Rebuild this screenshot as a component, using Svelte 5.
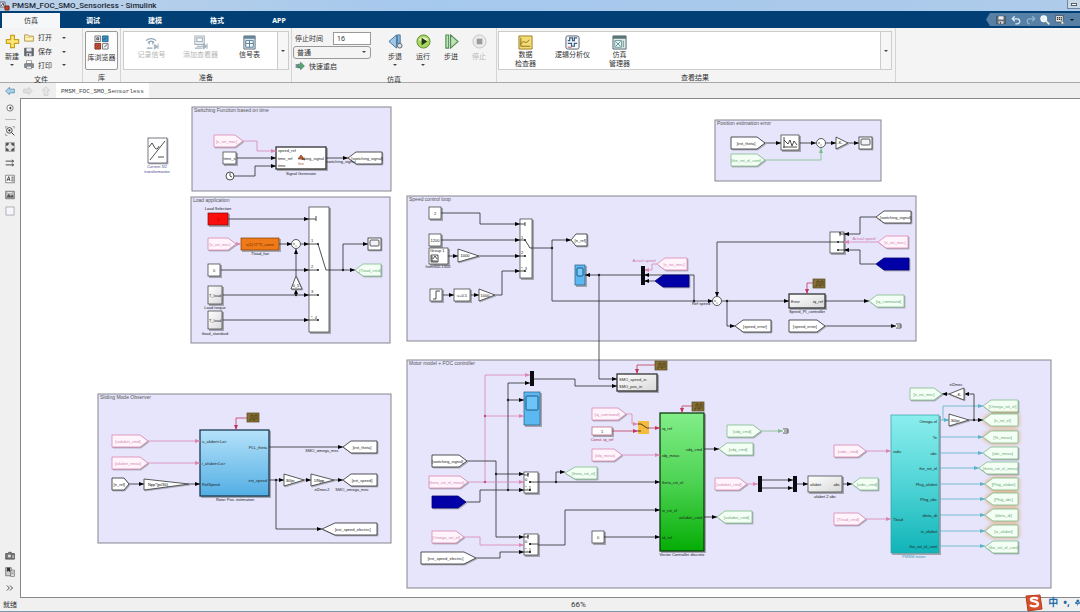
<script lang="ts">
  type Point = number[];

  interface Tag {
    x: number;
    y: number;
    w: number;
    h?: number;
    dir: "l" | "r";
    text?: string;
    tone?: string;
    tip?: number;
    glow?: boolean;
  }

  interface Wire {
    p: string;
    tone?: string;
  }

  interface Block {
    x: number;
    y: number;
    w: number;
    h: number;
    text?: string;
    fill?: string;
    stroke?: string;
    bold?: boolean;
    ink?: string;
  }

  let activeTab = $state("仿真");
  let stopTime = $state("16");
  let mode = $state("普通");

  const tabs = ["仿真", "调试", "建模", "格式", "APP"];

  const tones: Record<string, { line: string; fill: string; ink: string }> = {
    black: { line: "#2a2a2e", fill: "#ffffff", ink: "#222222" },
    pink: { line: "#dc86b4", fill: "#fff4fb", ink: "#d488b4" },
    green: { line: "#7dbd8b", fill: "#f3fff4", ink: "#6aa878" },
    blue: { line: "#000078", fill: "#0000a6", ink: "#0000a6" },
    red: { line: "#c2375c", fill: "#ffffff", ink: "#b02a4c" },
    teal: { line: "#58b4c8", fill: "#ffffff", ink: "#2f8fa0" }
  };

  const areas = [
    { x: 192, y: 107, w: 199, h: 84, title: "Switching Function based on time" },
    { x: 191, y: 197, w: 199, h: 146, title: "Load application" },
    { x: 407, y: 196, w: 509, h: 145, title: "Speed control loop" },
    { x: 715, y: 120, w: 166, h: 61, title: "Position estimation error" },
    { x: 98, y: 394, w: 293, h: 149, title: "Sliding Mode Observer" },
    { x: 407, y: 360, w: 644, h: 228, title: "Motor model + FOC controller" }
  ];

  const wires: Wire[] = [
    // switching function
    { p: "243,141 257,141 257,151 276,151", tone: "pink" },
    { p: "237,158 276,158" },
    { p: "234,176 255,176 255,166 276,166" },
    { p: "326,158 348,158" },
    // load application
    { p: "228,219 309,219" },
    { p: "236,244 241,244", tone: "pink" },
    { p: "279,244 292,244" },
    { p: "301,244 309,244" },
    { p: "221,270 309,270" },
    { p: "296,295 296,289" },
    { p: "296,276 296,249" },
    { p: "223,295 309,295" },
    { p: "223,320 309,320" },
    { p: "326,270 355,270" },
    { p: "343,270 343,244 368,244" },
    // speed control loop
    { p: "441,213 480,213 480,224 520,224" },
    { p: "441,240 520,240" },
    { p: "448,256 458,256" },
    { p: "479,256 520,256" },
    { p: "443,295 454,295" },
    { p: "471,295 479,295" },
    { p: "495,295 502,295 502,271 520,271" },
    { p: "532,248 552,248 552,240 571,240" },
    { p: "552,248 552,301 713,301" },
    { p: "642,275 585,275" },
    { p: "599,275 599,379 617,379" },
    { p: "657,264 652,264 652,270 644,270", tone: "pink" },
    { p: "694,301 694,275 644,275" },
    { p: "655,281 644,281" },
    { p: "830,242 717,242 717,297" },
    { p: "722,301 789,301" },
    { p: "727,301 727,326 735,326" },
    { p: "813,283 807,283 807,294", tone: "red" },
    { p: "825,301 869,301" },
    { p: "825,326 896,326" },
    { p: "876,217 860,217 860,234 844,234" },
    { p: "878,242 844,242", tone: "pink" },
    { p: "876,264 860,264 860,250 844,250" },
    // position error
    { p: "765,143 781,143" },
    { p: "800,143 816,143" },
    { p: "825,143 836,143" },
    { p: "848,143 859,143" },
    { p: "765,160 821,160 821,148", tone: "green" },
    // observer
    { p: "148,441 200,441", tone: "pink" },
    { p: "148,463 200,463", tone: "pink" },
    { p: "129,484 144,484" },
    { p: "189,484 200,484" },
    { p: "247,418 236,418 236,430", tone: "red" },
    { p: "269,447 343,447" },
    { p: "269,480 284,480" },
    { p: "304,480 311,480" },
    { p: "334,480 343,480" },
    { p: "276,480 276,529 322,529" },
    // motor model
    { p: "485,482 485,375 530,375", tone: "pink" },
    { p: "485,416 524,416", tone: "pink" },
    { p: "508,490 508,383 530,383" },
    { p: "508,400 524,400" },
    { p: "533,379 575,379 575,386 617,386" },
    { p: "655,365 637,365 637,374", tone: "red" },
    { p: "467,461 496,461 496,537 524,537" },
    { p: "496,474 524,474" },
    { p: "468,482 524,482", tone: "pink" },
    { p: "466,502 480,502 480,490 524,490" },
    { p: "538,482 660,482" },
    { p: "556,482 556,472 565,472" },
    { p: "464,537 480,537 480,545 524,545", tone: "pink" },
    { p: "476,558 500,558 500,552 524,552" },
    { p: "538,545 565,545 565,510 660,510" },
    { p: "604,537 660,537" },
    { p: "626,414 632,414 632,424 638,424", tone: "pink" },
    { p: "612,431 638,431", tone: "red" },
    { p: "649,428 660,428", tone: "red" },
    { p: "622,455 660,455", tone: "pink" },
    { p: "692,406 682,406 682,413", tone: "red" },
    { p: "704,449 719,449" },
    { p: "704,517 717,517" },
    { p: "761,431 783,431", tone: "green" },
    { p: "747,484 758,484", tone: "pink" },
    { p: "761,480 793,480" },
    { p: "761,488 793,488" },
    { p: "796,484 808,484" },
    { p: "843,484 852,484" },
    { p: "866,451 891,451", tone: "pink" },
    { p: "866,519 891,519", tone: "pink" },
    { p: "939,420 949,420", tone: "teal" },
    { p: "943,420 943,406 983,406", tone: "teal" },
    { p: "969,420 983,420" },
    { p: "974,420 974,394 964,394" },
    { p: "949,394 942,394" },
    { p: "939,437 983,437", tone: "teal" },
    { p: "939,453 983,453", tone: "teal" },
    { p: "939,468 979,468", tone: "teal" },
    { p: "939,484 985,484", tone: "teal" },
    { p: "939,499 985,499", tone: "teal" },
    { p: "939,515 985,515", tone: "teal" },
    { p: "939,531 985,531", tone: "teal" },
    { p: "939,546 985,546", tone: "teal" }
  ];

  const joints: Point[] = [
    [343, 270], [296, 295], [552, 248], [599, 275], [694, 301], [727, 301],
    [276, 480], [508, 400], [508, 490], [496, 474], [556, 482], [974, 420]
  ];

  const pinkJoints: Point[] = [[485, 416], [485, 482]];

  const tags: Tag[] = [
    { x: 214, y: 135, w: 29, dir: "r", text: "[n_rot_mec]", tone: "pink" },
    { x: 348, y: 152, w: 34, dir: "l", text: "[switching_signal]" },
    { x: 208, y: 238, w: 28, dir: "r", text: "[n_rot_mec]", tone: "pink" },
    { x: 355, y: 264, w: 26, dir: "l", text: "[Tload_cmd]", tone: "green" },
    { x: 571, y: 234, w: 16, dir: "l", text: "[n_ref]", tip: 5 },
    { x: 657, y: 258, w: 30, dir: "l", text: "[n_rot_mec]", tone: "pink" },
    { x: 655, y: 275, w: 34, dir: "l", tone: "blue" },
    { x: 735, y: 320, w: 36, dir: "l", text: "[speed_error]" },
    { x: 789, y: 320, w: 36, dir: "r", text: "[speed_error]" },
    { x: 869, y: 295, w: 35, dir: "l", text: "[iq_command]", tone: "green" },
    { x: 876, y: 211, w: 35, dir: "l", text: "[switching_signal]" },
    { x: 878, y: 236, w: 30, dir: "l", text: "[n_rot_mec]", tone: "pink" },
    { x: 876, y: 258, w: 33, dir: "l", tone: "blue" },
    { x: 731, y: 137, w: 34, dir: "r", text: "[est_theta]" },
    { x: 731, y: 154, w: 34, dir: "r", text: "[the_rot_el_cont]", tone: "green" },
    { x: 112, y: 435, w: 36, dir: "r", text: "[uafabet_cmd]", tone: "pink" },
    { x: 112, y: 457, w: 36, dir: "r", text: "[iafabet_meas]", tone: "pink" },
    { x: 112, y: 478, w: 17, dir: "r", text: "[n_ref]", tip: 5 },
    { x: 343, y: 441, w: 34, dir: "l", text: "[est_theta]" },
    { x: 343, y: 474, w: 34, dir: "l", text: "[est_speed]" },
    { x: 322, y: 523, w: 55, dir: "l", text: "[est_speed_electric]", tip: 13 },
    { x: 432, y: 455, w: 35, dir: "r", text: "[switching_signal]" },
    { x: 429, y: 476, w: 39, dir: "r", text: "[theta_rot_el_meas]", tone: "pink" },
    { x: 432, y: 496, w: 34, dir: "r", tone: "blue" },
    { x: 565, y: 467, w: 32, dir: "l", text: "[theta_rot_el]", tone: "green", tip: 10 },
    { x: 432, y: 531, w: 32, dir: "r", text: "[Omega_rot_el]", tone: "pink" },
    { x: 421, y: 552, w: 55, dir: "r", text: "[est_speed_electric]", tip: 12 },
    { x: 592, y: 408, w: 34, dir: "r", text: "[iq_command]", tone: "pink" },
    { x: 592, y: 449, w: 30, dir: "r", text: "[idq_meas]", tone: "pink" },
    { x: 719, y: 443, w: 34, dir: "l", text: "[vdq_cmd]", tone: "green" },
    { x: 717, y: 511, w: 35, dir: "l", text: "[uafabet_cmd]", tone: "green" },
    { x: 727, y: 425, w: 34, dir: "r", text: "[vdq_cmd]", tone: "green" },
    { x: 715, y: 478, w: 32, dir: "r", text: "[uafabet_cmd]", tone: "pink" },
    { x: 852, y: 478, w: 26, dir: "l", text: "[vabc_cmd]", tone: "green" },
    { x: 834, y: 445, w: 32, dir: "r", text: "[vabc_cmd]", tone: "pink" },
    { x: 834, y: 513, w: 32, dir: "r", text: "[Tload_cmd]", tone: "pink" },
    { x: 910, y: 388, w: 32, dir: "r", text: "[n_rot_mec]", tone: "green" },
    { x: 983, y: 400, w: 35, dir: "l", text: "[Omega_rot_el]", tone: "green" },
    { x: 983, y: 414, w: 35, dir: "l", text: "[n_rot_el]", tone: "green", glow: true },
    { x: 983, y: 431, w: 35, dir: "l", text: "[Te_mean]", tone: "green", glow: true },
    { x: 983, y: 447, w: 35, dir: "l", text: "[abc_meas]", tone: "green" },
    { x: 979, y: 462, w: 39, dir: "l", text: "[theta_rot_el_meas]", tone: "green" },
    { x: 985, y: 478, w: 33, dir: "l", text: "[Phig_afabet]", tone: "green", glow: true },
    { x: 985, y: 493, w: 33, dir: "l", text: "[Phig_abc]", tone: "green", glow: true },
    { x: 985, y: 509, w: 33, dir: "l", text: "[dteta_dt]", tone: "green", glow: true },
    { x: 985, y: 525, w: 33, dir: "l", text: "[is_afabet]", tone: "green", glow: true },
    { x: 985, y: 541, w: 33, dir: "l", text: "[the_rot_el_cont]", tone: "green" }
  ];

  const blocks: Block[] = [
    { x: 223, y: 152, w: 13, h: 12, text: "time_s" },
    { x: 276, y: 147, w: 50, h: 22, bold: true },
    { x: 208, y: 213, w: 20, h: 12, fill: "#fb0d0d", stroke: "#7a1010", text: "2", ink: "#8a0000" },
    { x: 309, y: 207, w: 20, h: 125 },
    { x: 241, y: 238, w: 38, h: 12, fill: "#f07a18", stroke: "#7c3c08", text: "u(1)^2*Tl_const", ink: "#6b2d00" },
    { x: 208, y: 264, w: 12, h: 12, text: "0" },
    { x: 208, y: 286, w: 14, h: 18, text: "T_load", fill: "url(#soft)" },
    { x: 208, y: 311, w: 14, h: 18, text: "T_load", fill: "url(#soft)" },
    { x: 429, y: 207, w: 12, h: 12, text: "2" },
    { x: 429, y: 234, w: 12, h: 12, text: "1200" },
    { x: 429, y: 248, w: 19, h: 16 },
    { x: 430, y: 289, w: 12, h: 12 },
    { x: 454, y: 289, w: 16, h: 12, text: "u+0.5" },
    { x: 520, y: 219, w: 12, h: 59 },
    { x: 575, y: 265, w: 10, h: 20, fill: "#5bb8f0", stroke: "#245a80" },
    { x: 789, y: 294, w: 36, h: 14, fill: "url(#soft)", bold: true },
    { x: 830, y: 232, w: 14, h: 21 },
    { x: 781, y: 135, w: 18, h: 15 },
    { x: 617, y: 374, w: 40, h: 17, fill: "url(#soft)", bold: true },
    { x: 200, y: 430, w: 69, h: 66, fill: "url(#sky)", stroke: "#1c3a52", bold: true },
    { x: 524, y: 392, w: 16, h: 33, fill: "#5bb8f0", stroke: "#245a80" },
    { x: 524, y: 472, w: 14, h: 21 },
    { x: 524, y: 534, w: 14, h: 21 },
    { x: 592, y: 531, w: 12, h: 12, text: "0" },
    { x: 592, y: 427, w: 20, h: 8, text: "1", stroke: "#b85c74" },
    { x: 660, y: 413, w: 44, h: 138, fill: "url(#leaf)", stroke: "#0f3d10", bold: true },
    { x: 808, y: 476, w: 34, h: 16, fill: "url(#soft)" },
    { x: 891, y: 415, w: 48, h: 138, fill: "url(#sea)", stroke: "#2ba0a4" }
  ];

  const scopes: Point[] = [[368, 238], [859, 137]];
  const muxes: Point[] = [[641, 266, 19], [530, 371, 15], [758, 476, 16], [793, 476, 16]];
  const triggers: Point[] = [[247, 413], [813, 279], [655, 361], [692, 402]];
  const sums: Point[] = [[296, 244], [717, 301], [821, 143]];
  const terminators: Point[] = [[896, 326], [783, 431]];
  // small three input switches, by top left corner
  const switches: Point[] = [[524, 472], [524, 534]];

  const gains = [
    { p: "291,289 302,289 296,276", x: 296, y: 287, text: "0_5" },
    { p: "458,249 458,262 479,256", x: 465, y: 257, text: "1000" },
    { p: "479,289 479,301 495,295", x: 485, y: 297, text: "1000" },
    { p: "836,137 836,149 848,143", x: 840, y: 144, text: "-K-" },
    { p: "144,479 144,490 189,484", x: 158, y: 486, text: "Npp*(pi/30)" },
    { p: "284,474 284,486 304,480", x: 290, y: 482, text: "30/pi" },
    { p: "311,474 311,486 334,480", x: 319, y: 482, text: "1/Npp" },
    { p: "949,414 949,426 969,420", x: 955, y: 422, text: "30/pi" },
    { p: "964,388 964,400 949,394", x: 959, y: 396, text: "-K-" }
  ];

  const labels = [
    { x: 157, y: 168, t: "Current 3/2", a: "middle", c: "#4a4a94" },
    { x: 157, y: 173, t: "transformation", a: "middle", c: "#4a4a94" },
    { x: 278, y: 152, t: "speed_ref" },
    { x: 278, y: 160, t: "time_ref" },
    { x: 278, y: 167, t: "time" },
    { x: 324, y: 160, t: "ching_signal", a: "end" },
    { x: 301, y: 165, t: "fcn", a: "middle", c: "#a33c1c" },
    { x: 301, y: 175, t: "Signal Generator", a: "middle" },
    { x: 341, y: 163, t: "switching_signal", a: "middle" },
    { x: 218, y: 210, t: "Load Selection", a: "middle" },
    { x: 260, y: 255, t: "Tload_fan", a: "middle" },
    { x: 215, y: 309, t: "Load torque", a: "middle" },
    { x: 215, y: 335, t: "tload_standard", a: "middle" },
    { x: 311, y: 242, t: "1" },
    { x: 311, y: 268, t: "2" },
    { x: 311, y: 293, t: "3" },
    { x: 311, y: 319, t: "*, 4" },
    { x: 521, y: 239, t: "1" },
    { x: 521, y: 254, t: "2" },
    { x: 521, y: 270, t: "*, 3" },
    { x: 430, y: 252, t: "Group 1" },
    { x: 438, y: 268, t: "from300-1300", a: "middle" },
    { x: 644, y: 262, t: "Actual speed", a: "middle", c: "#d070a8" },
    { x: 864, y: 240, t: "Actual speed", a: "middle", c: "#d070a8" },
    { x: 701, y: 305, t: "Ref speed", a: "middle" },
    { x: 791, y: 303, t: "Error" },
    { x: 823, y: 303, t: "iq_ref", a: "end" },
    { x: 807, y: 313, t: "Speed_PI_controller", a: "middle" },
    { x: 202, y: 443, t: "u_afabet<Lo>" },
    { x: 202, y: 465, t: "i_afabet<Lo>" },
    { x: 202, y: 486, t: "RefSpeed" },
    { x: 267, y: 449, t: "PLL_theta", a: "end" },
    { x: 267, y: 482, t: "est_speed", a: "end" },
    { x: 235, y: 501, t: "Rotor Pos. estimation", a: "middle" },
    { x: 322, y: 452, t: "SMO_omega_mec", a: "middle" },
    { x: 352, y: 491, t: "SMO_omega_mec", a: "middle" },
    { x: 322, y: 491, t: "el2mec2", a: "middle" },
    { x: 619, y: 381, t: "SMO_speed_in" },
    { x: 619, y: 388, t: "SMO_pos_in" },
    { x: 602, y: 441, t: "Const. iq_ref", a: "middle", c: "#b02a4c" },
    { x: 662, y: 430, t: "iq_ref" },
    { x: 662, y: 457, t: "idq_meas" },
    { x: 662, y: 484, t: "theta_rot_el" },
    { x: 662, y: 512, t: "w_rot_el" },
    { x: 662, y: 539, t: "id_ref" },
    { x: 702, y: 451, t: "vdq_cmd", a: "end" },
    { x: 702, y: 519, t: "uafabet_cmd", a: "end" },
    { x: 682, y: 556, t: "Vector Controller discrete", a: "middle" },
    { x: 810, y: 486, t: "afabet" },
    { x: 840, y: 486, t: "abc", a: "end" },
    { x: 825, y: 498, t: "afabet 2 abc", a: "middle" },
    { x: 893, y: 453, t: "vabc" },
    { x: 893, y: 521, t: "Tload" },
    { x: 937, y: 423, t: "Omega-el", a: "end" },
    { x: 937, y: 439, t: "Te", a: "end" },
    { x: 937, y: 455, t: "abc", a: "end" },
    { x: 937, y: 470, t: "the_rot_el", a: "end" },
    { x: 937, y: 486, t: "Phig_afabet", a: "end" },
    { x: 937, y: 501, t: "Phig_abc", a: "end" },
    { x: 937, y: 517, t: "dteta_dt", a: "end" },
    { x: 937, y: 533, t: "is_afabet", a: "end" },
    { x: 937, y: 548, t: "the_rot_el_cont", a: "end" },
    { x: 914, y: 558, t: "PMSM motor", a: "middle", c: "#2f9fae" },
    { x: 956, y: 386, t: "el2mec", a: "middle" }
  ];

  function tagPoints({ x, y, w, h = 12, dir, tip = 8 }: Tag) {
    const mid = y + h / 2;
    return dir === "r"
      ? `${x},${y} ${x + w - tip},${y} ${x + w},${mid} ${x + w - tip},${y + h} ${x},${y + h}`
      : `${x + w},${y} ${x + tip},${y} ${x},${mid} ${x + tip},${y + h} ${x + w},${y + h}`;
  }

  function tagCenter({ x, w, dir, tip = 8 }: Tag) {
    return dir === "r" ? x + (w - tip / 2) / 2 : x + w - (w - tip / 2) / 2;
  }
</script>

{#snippet icon(name: string)}
  <svg class="icon {name}" viewBox="0 0 16 16" aria-hidden="true">
    {#if name === "new"}
      <path d="M6 1.500h4v4.500h4.500v4H10v4.500H6V10H1.500V6H6z" fill="#ffe97a" stroke="#c9a21c" stroke-width="1.300" />
    {:else if name === "open"}
      <path d="M1 13V3h5l1.500 2H15v8z" fill="#fff3b8" stroke="#a99040" stroke-width="1.400" />
      <path d="M3 7h9" stroke="#d7bd62" />
    {:else if name === "save"}
      <path d="M1 2h14v12H1z" fill="#666d75" stroke="#3e4247" />
      <path d="M4 2h8v5H4z" fill="#e9edf0" />
      <path d="M4 10h8v4H4z" fill="#d5d9dc" />
      <path d="M6 11h2v3H6z" fill="#444" />
    {:else if name === "print"}
      <path d="M4 1h8v5H4z" fill="#fff" stroke="#777" />
      <path d="M1 6h14v6H1z" fill="#8c949b" stroke="#555" />
      <path d="M4 10h8v4H4z" fill="#f2f2f2" stroke="#666" />
    {:else if name === "library"}
      <path d="M1 1h6v6H1z" fill="#e8e8ec" stroke="#777" />
      <path d="M9 1h6v6H9z" fill="#3795c7" stroke="#26678c" />
      <path d="M1 9h6v6H1z" fill="#c64d32" stroke="#81301f" />
      <path d="M9 9h6v6H9z" fill="#f0f2f5" stroke="#777" />
      <path d="M3 3h2v2H3zM11 13l3-3M10 5l3-2M3 13l2-2" stroke="#445" fill="none" />
    {:else if name === "log"}
      <path d="M2 6a8 8 0 0 1 11 0M4 8a5 5 0 0 1 7 0M6 10a2 2 0 1 1 3 0M3 14h6" fill="none" stroke="#91a8b6" stroke-width="1.200" />
      <path d="M11 10l4 2.500-4 2.500zM15 9v6" fill="#a8b4bc" stroke="#a8b4bc" />
    {:else if name === "viewer"}
      <path d="M2 1h10v9H2zM4 3h6v4H4zM4 12h7M2 14h8" fill="none" stroke="#a3b0bc" stroke-width="1.200" />
      <path d="M11 9l4 3-4 3zM15 9v6" fill="#a8b4bc" stroke="#a8b4bc" />
    {:else if name === "table"}
      <path d="M2 1h12v14H2z" fill="#d5e5ef" stroke="#64717b" />
      <path d="M2 1h12v3H2z" fill="#66859a" />
      <path d="M4 6h8v7H4zM4 9h8M8 6v7" fill="#fff" stroke="#527b95" />
    {:else if name === "restart"}
      <path d="M1 5h4v6H1z" fill="#7b8b93" />
      <path d="M5 5h4V2l6 6-6 6v-3H5z" fill="#57a567" stroke="#426d75" />
    {:else if name === "back"}
      <path d="M1 8l8-7v14z" fill="#9fc6e6" stroke="#42739b" />
      <path d="M10 1h3v9h-3z" fill="#86b5dc" stroke="#42739b" />
      <circle cx="12.500" cy="12.500" r="2.500" fill="#dbe2e7" stroke="#52626d" />
    {:else if name === "run"}
      <circle cx="8" cy="8" r="7" fill="#a7d65c" stroke="#648b38" />
      <path d="M2.500 7a6 6 0 0 1 11 0z" fill="#dff3b9" />
      <path d="M6 4l6 4-6 4z" fill="#26331b" />
    {:else if name === "step"}
      <path d="M2 1h3v14H2zM7 1l8 7-8 7z" fill="#bfe3b1" stroke="#4f8d55" stroke-width="1.200" />
    {:else if name === "stop"}
      <circle cx="8" cy="8" r="7" fill="#ececec" stroke="#c3c3c3" />
      <path d="M5 5h6v6H5z" fill="#9b9b9b" />
    {:else if name === "inspect"}
      <path d="M1 1h14v14H1z" fill="#f2dc73" stroke="#9b7c27" />
      <path d="M3 12V3M3 12h10M3 10c3-7 5 2 9-5" fill="none" stroke="#8e6e20" />
    {:else if name === "logic"}
      <rect x="1" y="1" width="14" height="14" rx="2" fill="#f5f8fb" stroke="#555e69" />
      <path d="M3 6h2V3h3v3h2V3h3M3 9h4v3h3V9h3" fill="none" stroke="#3c5f83" stroke-width="1.300" />
      <path d="M3 13h4" stroke="#b55" />
    {:else if name === "manager"}
      <path d="M1 1h14v14H1z" fill="#deeae9" stroke="#50686c" />
      <path d="M1 1h14v3H1z" fill="#587678" />
      <path d="M3 6h7v7H3zM12 6v7" fill="#fff" stroke="#669094" />
      <path d="M4 7l5 5M9 7l-5 5" stroke="#338a78" />
    {:else if name === "left" || name === "right"}
      <path d={name === "left" ? "M1 8l6-6v3h8v6H7v3z" : "M15 8L9 2v3H1v6h8v3z"} fill={name === "left" ? "#a6d4ee" : "#e0e0e0"} stroke={name === "left" ? "#47799b" : "#c6c6c6"} />
    {:else if name === "up"}
      <path d="M8 1l6 6h-3v8H5V7H2z" fill="#e5e5e5" stroke="#c4c4c4" />
    {:else if name === "hide"}
      <circle cx="8" cy="8" r="5" fill="#fff" stroke="#777" stroke-width="1.500" />
      <path d="M10 5v6L6 8z" fill="#444" />
    {:else if name === "zoom"}
      <path d="M1 4V1h3M12 1h3v3M1 12v3h3" fill="none" stroke="#777" />
      <circle cx="7" cy="7" r="4.500" fill="#f8f8f8" stroke="#444" stroke-width="1.500" />
      <path d="M5 7h4M7 5v4M10 10l5 5" stroke="#333" stroke-width="1.500" />
    {:else if name === "fit"}
      <path d="M1 1h14v14H1z" fill="#e3e3e3" stroke="#777" />
      <path d="M3 6V3h3M10 3h3v3M13 10v3h-3M6 13H3v-3" fill="none" stroke="#222" stroke-width="2" />
    {:else if name === "signals"}
      <path d="M1 5h12M1 11h12M11 3l3 2-3 2M11 9l3 2-3 2" fill="none" stroke="#444" stroke-width="1.500" />
    {:else if name === "note"}
      <path d="M1 2h14v12H1z" fill="#fff" stroke="#555" />
      <path d="M3 11l3-7 2 7M4 9h4M10 5h4M10 8h4M10 11h4" fill="none" stroke="#333" stroke-width="1.300" />
    {:else if name === "image"}
      <path d="M1 2h14v12H1z" fill="#bbb" stroke="#555" />
      <path d="M2 12l4-6 3 4 3-3 2 5z" fill="#555" />
      <path d="M4 4h7" stroke="#fff" />
    {:else if name === "area"}
      <path d="M1.500 1.500h13v13h-13z" fill="#f6f6fb" stroke="#8b8b99" />
    {:else if name === "camera"}
      <path d="M1 4h4l1-2h4v2h5v9H1z" fill="#777" stroke="#444" />
      <circle cx="7" cy="8" r="2.500" fill="#ddd" /><path d="M11 6h4v6h-4z" fill="#bbb" stroke="#555" />
    {:else if name === "report"}
      <path d="M1 1h9v13H1z" fill="#ccc" stroke="#555" /><path d="M3 1h5v7L5 6 3 8z" fill="#333" />
      <path d="M9 5h6v10H9zM10 8h4M10 11h4" fill="#eee" stroke="#555" />
    {:else if name === "more"}
      <path d="M3 4l4 4-4 4M8 4l4 4-4 4" fill="none" stroke="#444" stroke-width="1.500" />
    {:else if name === "undo" || name === "redo"}
      <path d={name === "undo" ? "M6 2L2 6l4 4M2 6h8a4 4 0 0 1 0 8H7" : "M10 2l4 4-4 4M14 6H6a4 4 0 0 0 0 8"} fill="none" stroke={name === "undo" ? "#d9e9f6" : "#91b1cc"} stroke-width="2" />
    {:else if name === "search"}
      <circle cx="6" cy="6" r="4.500" fill="#e7f1f8" stroke="#fff" stroke-width="2" /><path d="M9.500 9.500L15 15" stroke="#e8dfce" stroke-width="3" />
    {:else if name === "keys"}
      <path d="M1 1h12v10H1z" fill="#f1f1f1" stroke="#333" /><path d="M3 4h8M3 7h8" stroke="#333" stroke-dasharray="2 1" stroke-width="2" /><path d="M10 8l5 5-5 2z" fill="#fff" stroke="#777" />
    {/if}
  </svg>
{/snippet}

{#snippet bigTool(name: string, lines: string[], caret = false, off = false)}
  <button type="button" class="big" disabled={off}>
    {@render icon(name)}
    <span>{#each lines as line}{line}<br />{/each}</span>
    {#if caret}<i class="caret"></i>{/if}
  </button>
{/snippet}

<div class="window">
  <header class="title">
    <svg class="app-icon" viewBox="0 0 10 10" aria-hidden="true">
      <path d="M0 1h5v5H0z" fill="#f3f3f3" stroke="#667" />
      <path d="M1 5l2-3 1 3" fill="none" stroke="#456" />
      <path d="M5 5h4v4H5z" fill="#ca3d24" stroke="#7b291b" />
    </svg>
    <span>PMSM_FOC_SMO_Sensorless - Simulink</span>
    <button type="button" class="minimize" aria-label="Minimize"><i></i></button>
  </header>

  <nav class="tabs">
    {#each tabs as tab}
      <button type="button" class:active={activeTab === tab} onclick={() => (activeTab = tab)}>{tab}</button>
    {/each}
    <div class="quick">
      {#each ["save", "undo", "redo", "search", "keys"] as name}
        <button type="button" aria-label={name}>{@render icon(name)}</button>
      {/each}
      <i class="caret"></i>
    </div>
  </nav>

  <div class="ribbon">
    <section class="group file">
      <div class="body">
        {@render bigTool("new", ["新建"], true)}
        <div class="stack">
          {#each [["open", "打开"], ["save", "保存"], ["print", "打印"]] as [name, text]}
            <button type="button" class="small">{@render icon(name)}<span>{text}</span><i class="caret"></i></button>
          {/each}
        </div>
      </div>
      <h2>文件</h2>
    </section>

    <section class="group library-group">
      <div class="body frame">{@render bigTool("library", ["库浏览器"])}</div>
      <h2>库</h2>
    </section>

    <section class="group prepare">
      <div class="body gallery">
        {@render bigTool("log", ["记录信号"], false, true)}
        {@render bigTool("viewer", ["添加查看器"], false, true)}
        {@render bigTool("table", ["信号表"])}
        <button type="button" class="expand" aria-label="More"><i class="caret"></i></button>
      </div>
      <h2>准备</h2>
    </section>

    <section class="group simulate">
      <div class="body">
        <div class="settings">
          <label>停止时间<input type="text" bind:value={stopTime} /></label>
          <div class="select">
            <select bind:value={mode} aria-label="仿真模式">
              <option>普通</option>
              <option>加速</option>
            </select>
            <i class="caret"></i>
          </div>
          <button type="button" class="small">{@render icon("restart")}<span>快速重启</span></button>
        </div>
        {@render bigTool("back", ["步退"], true)}
        {@render bigTool("run", ["运行"], true)}
        {@render bigTool("step", ["步进"])}
        {@render bigTool("stop", ["停止"], false, true)}
      </div>
      <h2>仿真</h2>
    </section>

    <section class="group review">
      <div class="body gallery">
        {@render bigTool("inspect", ["数据", "检查器"])}
        {@render bigTool("logic", ["逻辑分析仪"])}
        {@render bigTool("manager", ["仿真", "管理器"])}
        <button type="button" class="expand" aria-label="More"><i class="caret"></i></button>
      </div>
      <h2>查看结果</h2>
    </section>
  </div>

  <div class="path">
    {#each ["left", "right", "up"] as name}
      <button type="button" aria-label={name}>{@render icon(name)}</button>
    {/each}
    <a href="#model">PMSM_FOC_SMO_Sensorless</a>
  </div>

  <main>
    <aside>
      <button type="button" aria-label="hide">{@render icon("hide")}</button>
      <hr />
      {#each ["zoom", "fit", "signals", "note", "image", "area"] as name}
        <button type="button" aria-label={name}>{@render icon(name)}</button>
      {/each}
      <div class="spacer"></div>
      {#each ["camera", "report", "more"] as name}
        <button type="button" aria-label={name}>{@render icon(name)}</button>
      {/each}
    </aside>

    <div class="canvas" id="model">
      <svg viewBox="21 99 1059 498" role="img" aria-label="PMSM_FOC_SMO_Sensorless">
        <defs>
          {#each Object.entries(tones) as [name, tone]}
            <marker id="arrow-{name}" viewBox="0 0 5 4" refX="5" refY="2" markerWidth="5" markerHeight="4" markerUnits="userSpaceOnUse" orient="auto">
              <path d="M0 0l5 2-5 2z" fill={name === "black" ? "#000" : tone.line} />
            </marker>
          {/each}
          <linearGradient id="soft" x2="1" y2="1"><stop stop-color="#fff" /><stop offset="1" stop-color="#d9d9d9" /></linearGradient>
          <linearGradient id="sky" x2="0" y2="1"><stop stop-color="#b5e2fa" /><stop offset="1" stop-color="#52aee4" /></linearGradient>
          <linearGradient id="leaf" x2="0" y2="1"><stop stop-color="#82ee88" /><stop offset=".5" stop-color="#4dd353" /><stop offset="1" stop-color="#05ad05" /></linearGradient>
          <linearGradient id="sea" x2="0" y2="1"><stop stop-color="#8ceeee" /><stop offset=".5" stop-color="#50d4d6" /><stop offset="1" stop-color="#10b4b8" /></linearGradient>
        </defs>

        {#each areas as area}
          <rect class="area-box" x={area.x} y={area.y} width={area.w} height={area.h} />
          <text class="area-title" x={area.x + 2} y={area.y + 5}>{area.title}</text>
        {/each}

        {#each blocks as b}
          <rect x={b.x + 1} y={b.y + 1} width={b.w + 1} height={b.h + 1} fill="#a5a5b0" />
          <rect x={b.x} y={b.y} width={b.w} height={b.h} fill={b.fill ?? "#fff"} stroke={b.stroke ?? "#333"} stroke-width={b.bold ? 1.3 : 0.7} />
          {#if b.text}
            <text x={b.x + b.w / 2} y={b.y + b.h / 2 + 1.5} text-anchor="middle" fill={b.ink ?? "#222"}>{b.text}</text>
          {/if}
        {/each}

        {#each wires as wire}
          <polyline class="wire" points={wire.p} stroke={tones[wire.tone ?? "black"].line} marker-end="url(#arrow-{wire.tone ?? 'black'})" />
        {/each}
        {#each joints as [x, y]}
          <circle cx={x} cy={y} r="1.200" fill="#222" />
        {/each}
        {#each pinkJoints as [x, y]}
          <circle cx={x} cy={y} r="1.200" fill="#b8527e" />
        {/each}

        {#each tags as tag}
          {@const tone = tones[tag.tone ?? "black"]}
          <polygon class="tag" class:glow={tag.glow} points={tagPoints(tag)} fill={tone.fill} stroke={tone.line} />
          {#if tag.text}
            <text x={tagCenter(tag)} y={tag.y + 8} text-anchor="middle" fill={tone.ink}>{tag.text}</text>
          {/if}
        {/each}

        {#each gains as gain}
          <polygon class="tag" points={gain.p} fill="#fff" stroke="#333" />
          <text x={gain.x} y={gain.y} text-anchor="middle">{gain.text}</text>
        {/each}

        {#each sums as [x, y]}
          <circle cx={x} cy={y} r="4.500" fill="#fff" stroke="#333" stroke-width=".8" />
          <path d="M{x - 3} {y}h2M{x - 2} {y - 1}v2M{x - 1} {y + 2}h2" stroke="#555" stroke-width=".5" />
        {/each}
        {#each muxes as [x, y, h]}
          <rect {x} {y} width="4" height={h} fill="#0b0b12" />
        {/each}
        {#each triggers as [x, y]}
          <rect {x} {y} width="12" height="9" fill="#85703a" stroke="#574719" stroke-width=".7" />
          <path d="M{x + 2} {y + 7}h2v-5h2v5h2v-5h2v5" fill="none" stroke="#4a3b10" stroke-width=".7" />
        {/each}
        {#each scopes as [x, y]}
          <rect class="tag" {x} {y} width="13" height="12" fill="#fff" stroke="#333" />
          <rect x={x + 2} y={y + 2} width="9" height="6" rx="1" fill="#f2f2f8" stroke="#333" stroke-width=".8" />
        {/each}
        {#each terminators as [x, y]}
          <path d="M{x} {y - 2}h5v4h-5M{x + 1} {y}h4" fill="#fff" stroke="#333" stroke-width=".8" />
        {/each}
        {#each switches as [x, y]}
          <path d="M{x} {y + 3}h4v-2v4M{x} {y + 18}h6M{x + 6} {y + 10}h8" fill="none" stroke="#222" stroke-width=".8" />
          <circle cx={x + 6} cy={y + 10} r="1" /><circle cx={x + 6} cy={y + 18} r="1" />
          <text x={x + 1} y={y + 9}>0</text>
          <text x={x + 1} y={y + 17}>*, 1</text>
        {/each}

        <!-- switch internals -->
        <g class="inner">
          <path d="M309 219h7M316 216v5M309 244h9l8 26M309 270h9M309 295h9M309 320h9" />
          <path d="M520 224h5M525 222v4M520 240h5l5 8h2M520 256h5M520 271h5" />
          <path d="M844 234h-4v-2v4M844 242h-14M844 250h-6" />
        </g>
        {#each [[318, 244], [318, 270], [318, 295], [318, 320], [525, 240], [525, 256], [525, 271], [838, 242], [838, 250]] as [x, y]}
          <circle cx={x} cy={y} r="1" fill="#222" />
        {/each}
        <rect x="638" y="421" width="11" height="13" fill="#f7bb3c" />
        <path class="inner" d="M638 424h3l6 4h2M638 431h3" />

        <!-- block artwork -->
        <rect class="tag" x="148" y="138" width="19" height="25" fill="#fff" stroke="#556" />
        <path class="inner" d="M150 160l15-19M149 147l3-4 3 5q2 3 4-2M158 157h6" />
        <circle cx="230" cy="176" r="4" fill="#fff" stroke="#222" stroke-width=".8" />
        <path class="inner" d="M230 173v3l2 1" />
        <path d="M298 159l3-4 4 5-4-1z" fill="#d4571c" stroke="#51372c" stroke-width=".6" />
        <path class="inner" d="M433 299h3v-8h4" />
        <path class="inner" d="M431 255h7v7h-7zM432 261v-5M432 261h5M433 259l2-3 2 3" />
        <path class="inner" d="M784 137v11M783 147h14M784 140l4 4 2-4 2 6 2-5 3 4" />
        <rect x="577" y="268" width="6" height="8" rx="1" fill="#79cbfa" stroke="#184f78" stroke-width=".9" />
        <rect x="526" y="396" width="12" height="14" rx="1" fill="#6cc4f8" stroke="#184f78" stroke-width=".9" />

        {#each labels as l}
          <text x={l.x} y={l.y} text-anchor={l.a ?? "start"} fill={l.c ?? "#222"}>{l.t}</text>
        {/each}
      </svg>
    </div>
  </main>

  <footer>
    <span>就绪</span>
    <span class="percent">66%</span>
    <span></span>
    <div class="ime">
      <svg class="sogou" viewBox="0 0 18 18" aria-hidden="true">
        <path d="M1 2l14-1 2 14-14 2z" fill="#d94f2b" stroke="#b53c1e" />
        <path d="M13 5c-3-2-8-1-7 1s7 1 7 4-6 3-8 1" fill="none" stroke="#fff" stroke-width="2.300" />
      </svg>
      <span>中</span>
      <span>•,</span>
      <svg class="mic" viewBox="0 0 8 10" aria-hidden="true"><path d="M3 1h3v5H3zM1 4v3h6V4M4 7v3" fill="#246bab" stroke="#246bab" /></svg>
    </div>
  </footer>
</div>

<style>
:global(body) {
  margin: 0;
  background: #f0f0f0;
}

.window {
  min-height: 100vh;
  display: flex;
  flex-direction: column;
  overflow: hidden;
  position: relative;
  font-family: "Noto Sans", "Noto Sans CJK SC", sans-serif;
  font-size: 7px;
  line-height: 9px;
  color: #333;
}

.window * {
  box-sizing: border-box;
}

button {
  padding: 0;
  border: 0;
  background: none;
  font: inherit;
  color: inherit;
}

.icon {
  display: block;
  width: 10px;
  height: 10px;
  flex: none;
}

.caret {
  flex: none;
  border: 2px solid transparent;
  border-top-color: #444;
  border-bottom: 0;
}

.title {
  height: 11px;
  display: flex;
  align-items: center;
  gap: 2px;
  background: linear-gradient(90deg, #bcd2e9, #a5c8ed 40%, #aecbea);
  color: #1c2836;
  font-family: Roboto, sans-serif;
  font-size: 8px;
  font-weight: 500;
  line-height: 11px;
}

.app-icon {
  width: 10px;
  height: 10px;
}

.minimize {
  width: 13px;
  height: 9px;
  margin-left: auto;
  align-self: flex-start;
  border: 1px solid #71859c;
  border-width: 0 0 1px 1px;
  background: #c9d8e7;
}

.minimize i {
  display: block;
  width: 6px;
  height: 3px;
  margin: 2px auto;
  border: 1px solid #56616d;
  background: #fff;
}

.tabs {
  height: 17px;
  display: flex;
  padding-top: 2px;
  background: #013f75;
}

.tabs > button {
  width: 62px;
  color: #fff;
  font-weight: 700;
  line-height: 13px;
}

.tabs > button.active {
  width: 58px;
  margin: 0 2px;
  background: #f5f7f8;
  color: #333;
  font-weight: 400;
}

.quick {
  width: 94px;
  height: 13px;
  margin-left: auto;
  padding: 0 6px 0 10px;
  display: flex;
  align-items: center;
  justify-content: space-between;
  background: #5680a6;
  clip-path: polygon(4px 0, 100% 0, 100% 100%, 4px 100%, 0 50%);
}

.quick .caret {
  border-top-color: #111;
}

.ribbon {
  height: 55px;
  display: flex;
  background: #f4f4f4;
  border-bottom: 1px solid #aaa;
}

.group {
  display: flex;
  flex-direction: column;
  border-right: 1px solid #d4d4d4;
  padding-top: 3px;
}

.group h2 {
  margin: 0;
  padding-top: 3px;
  font-size: 7px;
  font-weight: 400;
  line-height: 9px;
  text-align: center;
}

.body {
  height: 41px;
  display: flex;
}

.file {
  width: 83px;
}

.library-group {
  width: 38px;
  padding-left: 2px;
  padding-right: 2px;
}

.prepare {
  width: 171px;
  padding-left: 2px;
  padding-right: 2px;
}

.simulate {
  width: 205px;
}

.review {
  flex: 0 1 399px;
  padding-left: 1px;
  padding-right: 3px;
}

.big {
  display: flex;
  flex-direction: column;
  align-items: center;
  padding-top: 3px;
  gap: 3px;
  white-space: nowrap;
}

.big .icon {
  width: 15px;
  height: 15px;
}

.big:disabled {
  color: #b4b4b4;
}

.file .big {
  width: 24px;
}

.stack {
  display: flex;
  flex-direction: column;
}

.small {
  height: 14px;
  display: flex;
  align-items: center;
  gap: 4px;
}

.stack .small span {
  width: 20px;
  text-align: left;
}

.frame {
  border: 1px solid #999;
  border-radius: 2px;
  background: #fcfcfc;
  justify-content: center;
}

.gallery {
  border: 1px solid #ccc;
  background: #fff;
}

.gallery .big {
  gap: 0;
}

.prepare .big {
  width: 49px;
}

.prepare .big:first-child,
.review .big:first-child {
  margin-left: 3px;
}

.review .big {
  width: 47px;
}

.expand {
  width: 11px;
  margin-left: auto;
  border-left: 1px solid #ccc;
  background: #f6f6f6;
  display: flex;
  align-items: center;
  justify-content: center;
}

.settings {
  width: 79px;
  margin-right: 10px;
  padding-left: 1px;
}

.settings label {
  height: 14px;
  padding-left: 2px;
  display: flex;
  align-items: center;
  justify-content: space-between;
  white-space: nowrap;
}

.settings .small {
  padding-left: 2px;
}

input,
select {
  height: 13px;
  padding: 0 3px;
  border: 1px solid #999;
  background: #fff;
  color: #333;
  font: inherit;
}

input {
  width: 38px;
}

.select {
  position: relative;
  height: 14px;
  display: flex;
  align-items: center;
}

select {
  width: 100%;
  appearance: none;
  border-radius: 3px;
  background: #f4f4f4;
}

.select .caret {
  position: absolute;
  right: 5px;
  top: 6px;
}

.simulate .big {
  width: 28px;
}

.path {
  height: 15px;
  display: flex;
  align-items: center;
  padding-left: 1px;
  background: #efefef;
}

.path button {
  width: 18px;
  display: flex;
  justify-content: center;
}

.path a {
  align-self: stretch;
  margin-left: 1px;
  padding: 0 5px;
  background: #fff;
  color: #444;
  font-family: "Liberation Mono", monospace;
  font-size: 6px;
  line-height: 17px;
  text-decoration: none;
}

main {
  flex: 1;
  display: flex;
}

aside {
  width: 20px;
  flex: none;
  padding: 2px 0;
  display: flex;
  flex-direction: column;
  align-items: center;
  background: #f0f0f0;
}

aside button {
  height: 16px;
  display: flex;
  align-items: center;
}

aside hr {
  width: 11px;
  margin: 3px 0;
  border: 0;
  border-top: 1px solid #bbb;
}

.spacer {
  flex: 1;
}

.canvas {
  flex: 1;
  min-width: 0;
  border: 1px solid #888;
  border-right: 0;
  background: #fff;
}

.canvas svg {
  display: block;
  width: 100%;
}

.canvas text {
  font-family: "Liberation Sans", Arial, sans-serif;
  font-size: 4px;
}

.canvas .area-title {
  font-size: 5px;
  fill: #555;
}

.area-box {
  fill: #e6e5fb;
  stroke: #85858f;
}

.wire {
  fill: none;
  stroke-width: 0.8;
}

.tag {
  stroke-width: 0.8;
  filter: drop-shadow(1px 1px 0 #aaaab6);
}

.glow {
  filter: drop-shadow(0 0 2px #dc9c5c);
}

.inner {
  fill: none;
  stroke: #222;
  stroke-width: 0.8;
}

footer {
  height: 14px;
  display: grid;
  grid-template-columns: 1fr 1fr 1fr;
  align-items: center;
  padding: 0 3px;
  border-bottom: 1px solid #7d98a8;
  background: #f0f0f0;
}

.percent {
  padding-left: 77px;
  justify-self: center;
  font-family: Roboto, sans-serif;
  font-size: 8px;
}

.ime {
  position: absolute;
  right: 0;
  bottom: 0;
  width: 55px;
  height: 19px;
  display: flex;
  align-items: center;
  justify-content: space-between;
  color: #246bab;
  font-size: 10px;
  font-weight: 700;
}

.sogou {
  width: 18px;
  height: 18px;
}

.mic {
  width: 5px;
  height: 9px;
}
</style>
